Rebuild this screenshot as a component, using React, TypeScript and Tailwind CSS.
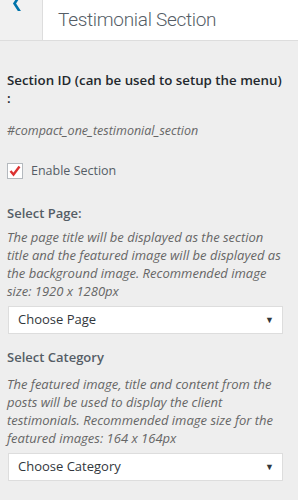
import React from 'react';

const font = { fontFamily: '"Open Sans", "Noto Sans", sans-serif' };

const Select: React.FC<{ label: string }> = ({ label }) => (
  <div className="relative h-[28px] w-[275px] bg-white border border-[#dddddd] flex items-center pl-[9px] text-[13px] text-[#32373c]">
    <span>{label}</span>
    <span className="absolute right-[8px] top-[8px] text-[9px] text-[#32373c] leading-none">▼</span>
  </div>
);

const App: React.FC = () => {
  return (
    <div className="w-[298px] h-[500px] bg-[#eeeeee] overflow-hidden" style={font}>
      {/* Header */}
      <div className="flex h-[41px] bg-white border-b border-[#dddddd]">
        <div className="relative w-[43px] h-full bg-[#f1f1f1] border-r border-[#dddddd] shrink-0">
          <svg className="absolute left-[10px] top-[-9px]" width="16" height="20" viewBox="0 0 16 20">
            <path d="M11 2.5 L4.5 12.5 L11 22.5" fill="none" stroke="#0073aa" strokeWidth="2.6" />
          </svg>
        </div>
        <div
          className="pl-[15px] pt-[2px] text-[19px] font-light text-[#555d66] leading-[36px] tracking-[-0.3px]"
          style={{ fontFamily: 'Roboto, "Open Sans", sans-serif' }}
        >
          Testimonial Section
        </div>
      </div>

      {/* Content */}
      <div className="pl-[7px] pr-[15px] pt-[30px]">
        <div className="text-[13.3px] font-semibold text-[#23282d] leading-[18px]">
          Section ID (can be used to setup the menu)
          <br />:
        </div>
        <div className="mt-[15px] text-[12.5px] italic text-[#666666] leading-[18px]">
          #compact_one_testimonial_section
        </div>

        <label className="mt-[22px] flex items-center gap-[8px]">
          <span className="w-[16px] h-[16px] bg-white border border-[#b4b9be] flex items-center justify-center">
            <svg width="14" height="14" viewBox="0 0 14 14">
              <path d="M2.5 7 L5.5 10.5 L11.5 2.5" fill="none" stroke="#dc3232" strokeWidth="2.4" />
            </svg>
          </span>
          <span className="text-[12.5px] text-[#555d66] leading-[18px]">Enable Section</span>
        </label>

        <div className="mt-[24px] text-[13px] font-semibold text-[#555d66] leading-[18px]">Select Page:</div>
        <div className="mt-[6px] text-[13px] italic text-[#666666] leading-[18px]">
          The page title will be displayed as the section title and the featured image will be displayed as the background image. Recommended image size: 1920 x 1280px
        </div>
        <div className="mt-[6px] pl-[1px]">
          <Select label="Choose Page" />
        </div>

        <div className="mt-[14px] text-[13px] font-semibold text-[#555d66] leading-[18px]">Select Category</div>
        <div className="mt-[9px] text-[13px] italic text-[#666666] leading-[18px]">
          The featured image, title and content from the posts will be used to display the client testimonials. Recommended image size for the featured images: 164 x 164px
        </div>
        <div className="mt-[6px] pl-[1px]">
          <Select label="Choose Category" />
        </div>
      </div>
    </div>
  );
};

export default App;
